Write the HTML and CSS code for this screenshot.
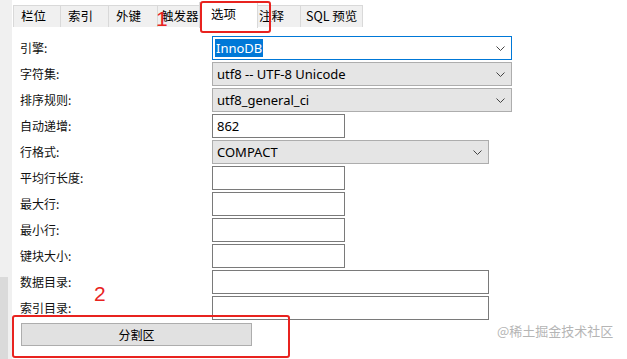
FILE: index.html
```html
<!DOCTYPE html>
<html lang="zh-CN">
<head>
  <meta charset="UTF-8" />
  <title>选项</title>
  <link rel="stylesheet" href="styles.css">
</head>
<body>
  <div class="window">
    <div class="edge">
      <div class="edge-dark"></div>
    </div>
    <div class="main">
      <div class="tabs">
        <div class="tab tab-first">栏位</div>
        <div class="tab">索引</div>
        <div class="tab">外键</div>
        <div class="tab tab-trigger">触发器</div>
        <div class="tab tab-active">选项</div>
        <div class="tab tab-comment">注释</div>
        <div class="tab tab-sql">SQL 预览</div>
      </div>

      <div class="panel">
        <div class="form">
          <label>引擎:</label>
          <div class="select select-focus wide"><span class="sel-text">InnoDB</span><svg class="chev" width="9" height="5" viewBox="0 0 9 5"><polyline points="0.5,0.5 4.5,4.5 8.5,0.5" /></svg></div>

          <label>字符集:</label>
          <div class="select wide"><span>utf8 -- UTF-8 Unicode</span><svg class="chev" width="9" height="5" viewBox="0 0 9 5"><polyline points="0.5,0.5 4.5,4.5 8.5,0.5" /></svg></div>

          <label>排序规则:</label>
          <div class="select wide"><span>utf8_general_ci</span><svg class="chev" width="9" height="5" viewBox="0 0 9 5"><polyline points="0.5,0.5 4.5,4.5 8.5,0.5" /></svg></div>

          <label>自动递增:</label>
          <div class="input short">862</div>

          <label>行格式:</label>
          <div class="select mid"><span>COMPACT</span><svg class="chev" width="9" height="5" viewBox="0 0 9 5"><polyline points="0.5,0.5 4.5,4.5 8.5,0.5" /></svg></div>

          <label>平均行长度:</label>
          <div class="input short"></div>

          <label>最大行:</label>
          <div class="input short"></div>

          <label>最小行:</label>
          <div class="input short"></div>

          <label>键块大小:</label>
          <div class="input short"></div>

          <label>数据目录:</label>
          <div class="input mid"></div>

          <label>索引目录:</label>
          <div class="input mid"></div>
        </div>

        <button class="btn">分割区</button>
      </div>
    </div>
  </div>

  <!-- annotations drawn over the screenshot -->
  <div class="mark mark-tab"></div>
  <div class="num num-1">1</div>
  <div class="mark mark-btn"></div>
  <div class="num num-2">2</div>
  <div class="watermark">@稀土掘金技术社区</div>
</body>
</html>
```

FILE: styles.css
```css
html, body {
  margin: 0;
  padding: 0;
  width: 100%;
  height: 100%;
  background: #fff;
  font-family: "Noto Sans CJK SC", "Noto Sans", sans-serif;
  color: #000;
  overflow: hidden;
}

.window {
  display: flex;
  height: 359px;
}

.edge {
  width: 12px;
  background: #f0f0f0;
  display: flex;
  flex-direction: column;
  justify-content: flex-end;
}

.edge-dark {
  width: 8px;
  height: 82px;
  background: #dadada;
}

.main {
  flex: 1;
  display: flex;
  flex-direction: column;
}

.tabs {
  display: flex;
  align-items: flex-end;
  height: 28px;
  padding-left: 1px;
  box-sizing: border-box;
}

.tab {
  flex: none;
  width: 48px;
  height: 22px;
  box-sizing: border-box;
  border: 1px solid #d9d9d9;
  border-left: none;
  border-bottom: none;
  background: #f0f0f0;
  font-size: 12.5px;
  line-height: 20px;
  padding-left: 7px;
  margin-bottom: 1px;
  white-space: nowrap;
  overflow: hidden;
}

.tab-first {
  border-left: 1px solid #d9d9d9;
}

.tab:nth-child(3) { width: 49px; }

.tab-trigger {
  width: 47px;
  padding-left: 3px;
}

.tab-active {
  width: 59px;
  margin-left: -6px;
  background: #fff;
  height: 26px;
  padding-left: 11px;
  line-height: 22px;
  border-left: 1px solid #d9d9d9;
  position: relative;
  margin-bottom: 0;
}

.tab-comment {
  width: 43px;
  padding-left: 1px;
}

.tab-sql {
  width: 62px;
  padding-left: 5px;
}

.panel {
  flex: 1;
  background: #fff;
  padding: 8px 0 0 8px;
}

.form {
  display: grid;
  grid-template-columns: 192px auto;
  grid-auto-rows: 24px;
  row-gap: 2px;
  justify-items: start;
  align-items: center;
}

.form label {
  font-size: 12px;
  line-height: 24px;
  color: #111;
}

.select, .input {
  height: 24px;
  box-sizing: border-box;
  font-family: "Noto Sans", sans-serif;
  font-size: 13px;
  line-height: 22px;
  padding: 0 4px;
  display: flex;
  align-items: center;
  justify-content: space-between;
}

.select {
  background: #e5e5e5;
  border: 1px solid #adadad;
}

.select-focus {
  background: #fff;
  border-color: #0078d7;
  padding-left: 2px;
}

.sel-text {
  background: #0078d7;
  color: #fff;
  padding: 0 1px;
  line-height: 18px;
}

.input {
  background: #fff;
  border: 1px solid #7a7a7a;
}

.wide { width: 300px; }
.mid { width: 277px; }
.short { width: 133px; }

.chev {
  margin-right: 2px;
  fill: none;
  stroke: #444;
  stroke-width: 1;
}

.btn {
  margin: 3px 0 0 1px;
  width: 231px;
  height: 23px;
  background: #e1e1e1;
  border: 1px solid #adadad;
  font-family: "Noto Sans CJK SC", sans-serif;
  font-size: 12px;
  color: #000;
  padding: 0;
}

.mark {
  position: absolute;
  border: 2px solid #e8231f;
  border-radius: 3px;
  box-sizing: border-box;
}

.mark-tab {
  left: 200px;
  top: 1px;
  width: 71px;
  height: 32px;
}

.mark-btn {
  left: 12px;
  top: 315px;
  width: 278px;
  height: 43px;
}

.num {
  position: absolute;
  color: #e8231f;
  font-family: "Liberation Sans", sans-serif;
  font-size: 21px;
  line-height: 21px;
}

.num-1 { left: 156px; top: 8px; }
.num-2 { left: 94px; top: 283px; }

.watermark {
  position: absolute;
  left: 497px;
  top: 321px;
  font-size: 13px;
  color: #b5b5b5;
  font-family: "Noto Sans CJK SC", sans-serif;
}
```
